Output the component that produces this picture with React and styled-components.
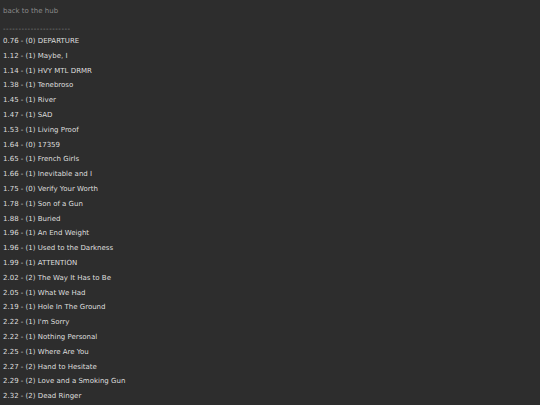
import React from "react";
import styled, { createGlobalStyle } from "styled-components";

const GlobalStyle = createGlobalStyle`
  html, body {
    margin: 0;
    padding: 0;
    background: #2d2d2d;
  }
`;

const Page = styled.div`
  min-height: 405px;
  background: #2d2d2d;
  padding: 4.4px 3px;
  box-sizing: border-box;
  font-family: "DejaVu Sans", Verdana, sans-serif;
  font-size: 7px;
  line-height: 14.8px;
  color: #dedede;
`;

const BackLink = styled.a`
  display: block;
  color: #8a8a8a;
  text-decoration: none;
`;

const Separator = styled.div`
  color: #8a8a8a;
  letter-spacing: 0.55px;
  padding-top: 3px;
  margin-bottom: -3px;
`;

const List = styled.ul`
  list-style: none;
  margin: 0;
  padding: 0;
`;

const Item = styled.li`
  margin: 0;
  white-space: nowrap;
`;

const songs = [
  ["0.76", 0, "DEPARTURE"],
  ["1.12", 1, "Maybe, I"],
  ["1.14", 1, "HVY MTL DRMR"],
  ["1.38", 1, "Tenebroso"],
  ["1.45", 1, "River"],
  ["1.47", 1, "SAD"],
  ["1.53", 1, "Living Proof"],
  ["1.64", 0, "17359"],
  ["1.65", 1, "French Girls"],
  ["1.66", 1, "Inevitable and I"],
  ["1.75", 0, "Verify Your Worth"],
  ["1.78", 1, "Son of a Gun"],
  ["1.88", 1, "Buried"],
  ["1.96", 1, "An End Weight"],
  ["1.96", 1, "Used to the Darkness"],
  ["1.99", 1, "ATTENTION"],
  ["2.02", 2, "The Way It Has to Be"],
  ["2.05", 1, "What We Had"],
  ["2.19", 1, "Hole In The Ground"],
  ["2.22", 1, "I'm Sorry"],
  ["2.22", 1, "Nothing Personal"],
  ["2.25", 1, "Where Are You"],
  ["2.27", 2, "Hand to Hesitate"],
  ["2.29", 2, "Love and a Smoking Gun"],
  ["2.32", 2, "Dead Ringer"],
];

export default function App() {
  return (
    <>
      <GlobalStyle />
      <Page>
        <BackLink href="#">back to the hub</BackLink>
        <Separator>----------------------</Separator>
        <List>
          {songs.map(([score, n, title], i) => (
            <Item key={i}>
              {score} - ({n}) {title}
            </Item>
          ))}
        </List>
      </Page>
    </>
  );
}
